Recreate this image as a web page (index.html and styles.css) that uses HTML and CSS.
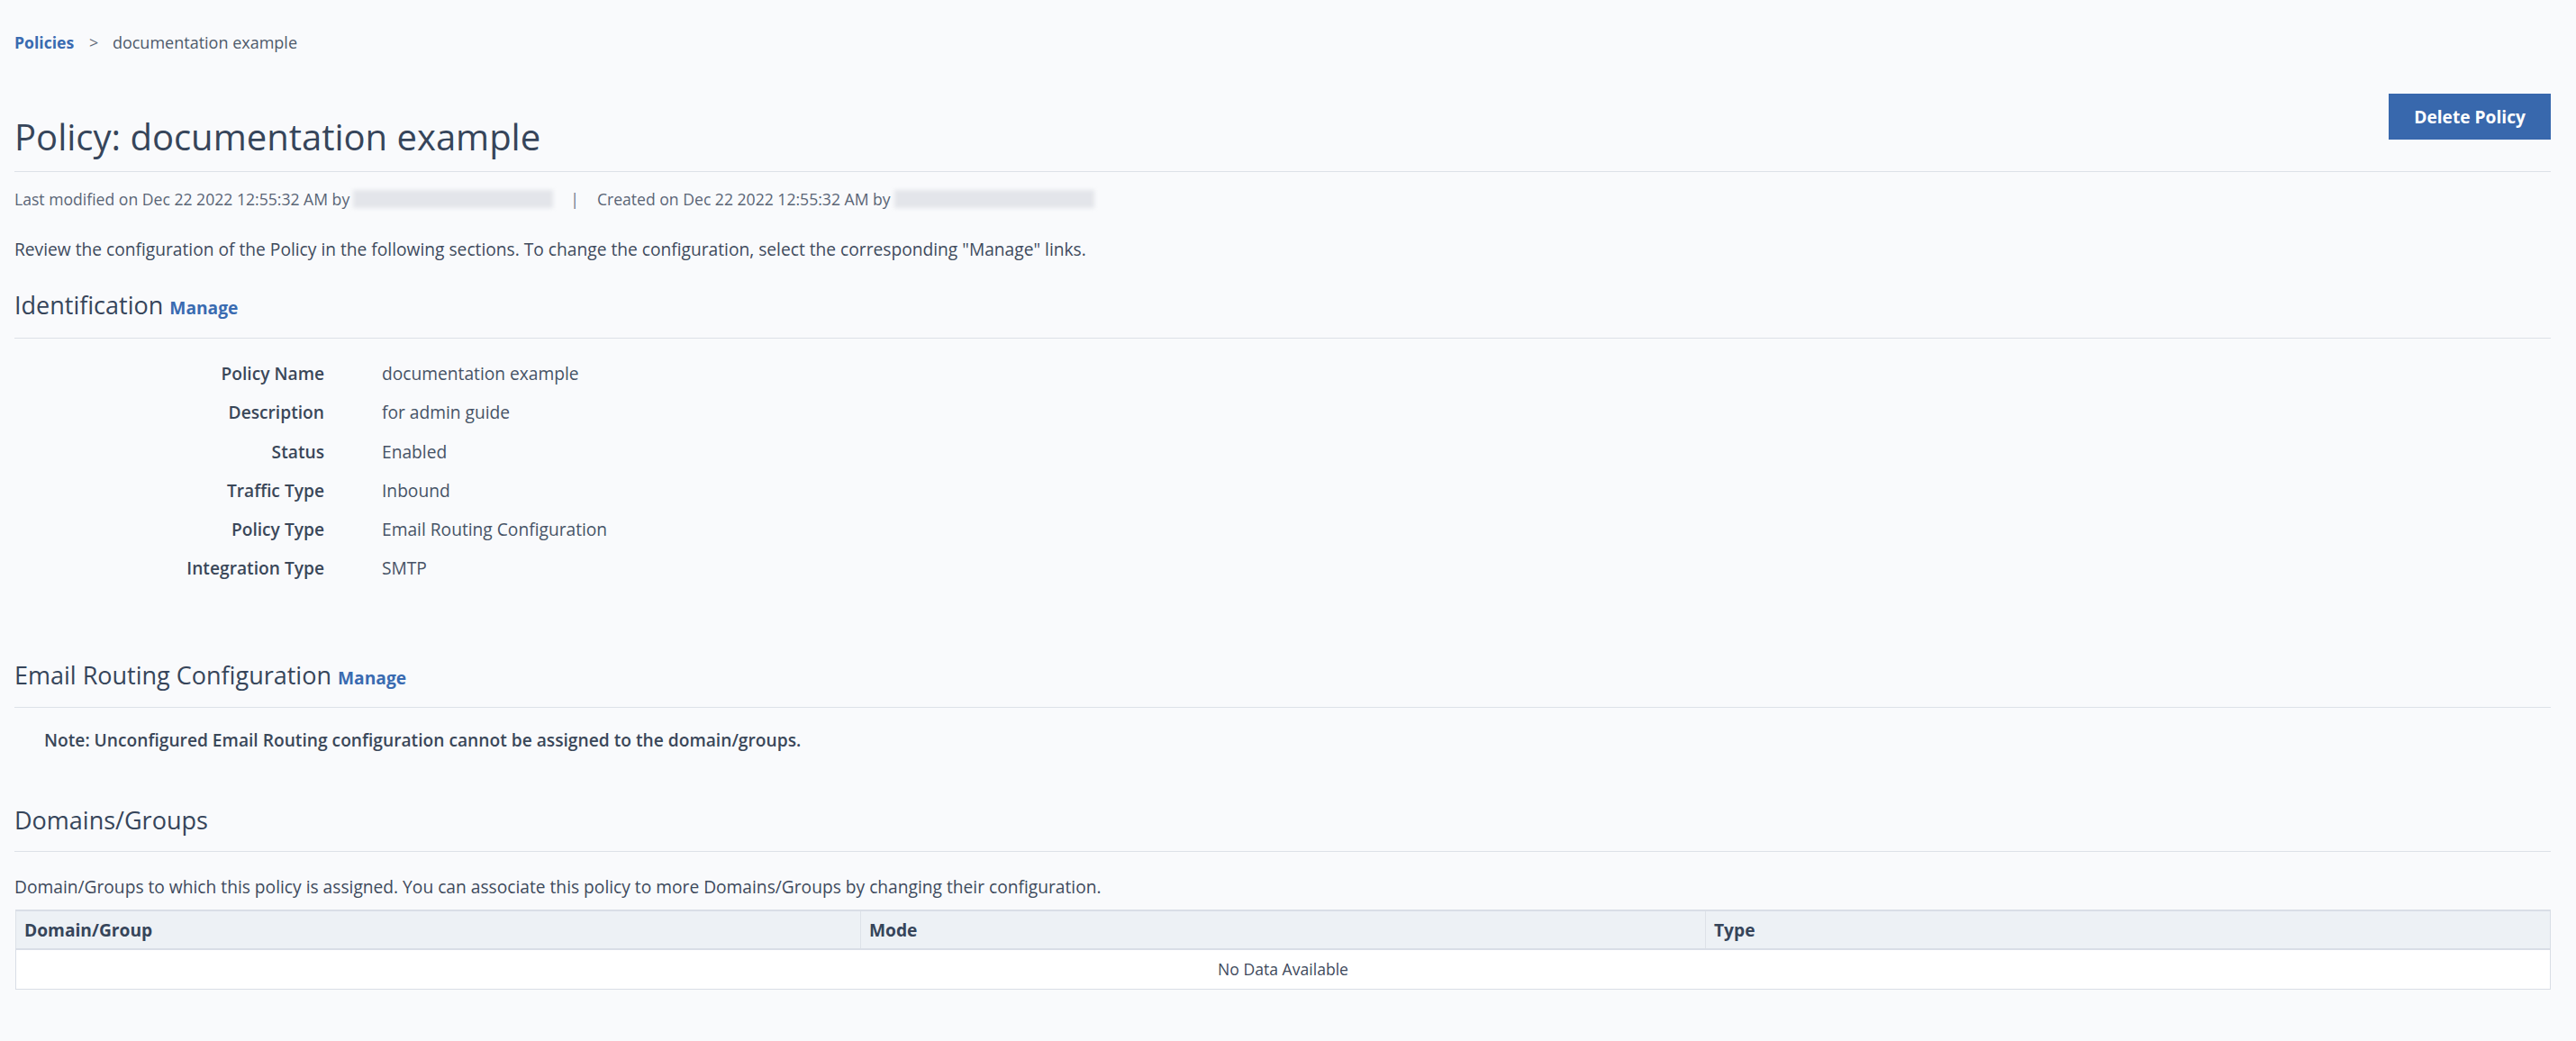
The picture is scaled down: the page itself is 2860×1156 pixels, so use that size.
FILE: index.html
```html
<!DOCTYPE html>
<html>
<head>
	<title>Policy: documentation example</title>
	<link rel="stylesheet" href="styles.css">
</head>
<body>
	<div class="page">
		<div class="breadcrumb">
			<a class="crumb-link" href="#">Policies</a>
			<span class="crumb-sep">&gt;</span>
			<span class="crumb-current">documentation example</span>
		</div>

		<div class="page-header">
			<h1 class="page-title">Policy: documentation example</h1>
			<button class="btn-primary">Delete Policy</button>
		</div>

		<div class="meta">
			<span>Last modified on Dec 22 2022 12:55:32 AM by</span>
			<span class="redacted"></span>
			<span class="meta-sep">|</span>
			<span>Created on Dec 22 2022 12:55:32 AM by</span>
			<span class="redacted"></span>
		</div>

		<p class="intro">Review the configuration of the Policy in the following sections. To change the configuration, select the corresponding "Manage" links.</p>

		<div class="section">
			<h2 class="section-title">Identification <a class="manage" href="#">Manage</a></h2>
			<div class="details">
				<div class="label">Policy Name</div>
				<div class="value">documentation example</div>
				<div class="label">Description</div>
				<div class="value">for admin guide</div>
				<div class="label">Status</div>
				<div class="value">Enabled</div>
				<div class="label">Traffic Type</div>
				<div class="value">Inbound</div>
				<div class="label">Policy Type</div>
				<div class="value">Email Routing Configuration</div>
				<div class="label">Integration Type</div>
				<div class="value">SMTP</div>
			</div>
		</div>

		<div class="section section-routing">
			<h2 class="section-title">Email Routing Configuration <a class="manage" href="#">Manage</a></h2>
			<div class="note">Note: Unconfigured Email Routing configuration cannot be assigned to the domain/groups.</div>
		</div>

		<div class="section section-domains">
			<h2 class="section-title">Domains/Groups</h2>
			<p class="section-desc">Domain/Groups to which this policy is assigned. You can associate this policy to more Domains/Groups by changing their configuration.</p>
			<table class="data-table">
				<thead>
					<tr>
						<th>Domain/Group</th>
						<th>Mode</th>
						<th>Type</th>
					</tr>
				</thead>
				<tbody>
					<tr>
						<td class="empty" colspan="3">No Data Available</td>
					</tr>
				</tbody>
			</table>
		</div>
	</div>
</body>
</html>
```

FILE: styles.css
```css
body {
	margin: 0;
	padding: 0;
	background-color: #f9fafc;
	font-family: "Open Sans", "Noto Sans", sans-serif;
	color: #3a4759;
}
.page {
	padding: 35px 28px 40px 16px;
}
.breadcrumb {
	font-size: 18px;
	line-height: 24px;
	color: #4e5a6b;
}
.crumb-link {
	color: #3a6bb1;
	font-size: 17.6px;
	font-weight: 700;
	text-decoration: none;
}
.crumb-sep {
	margin: 0 11px 0 12px;
	color: #5d6878;
}
.page-header {
	display: flex;
	justify-content: space-between;
	align-items: flex-start;
	margin-top: 45px;
	padding-bottom: 11px;
	border-bottom: 1px solid #dde1e8;
}
.page-title {
	margin: 21px 0 0;
	font-size: 40px;
	line-height: 54px;
	font-weight: 400;
	color: #36455a;
}
.btn-primary {
	height: 51px;
	padding: 0 28px;
	border: none;
	background-color: #3868ad;
	color: #fff;
	font-family: inherit;
	font-size: 19.2px;
	font-weight: 700;
}
.meta {
	display: flex;
	align-items: center;
	margin-top: 18px;
	font-size: 17.6px;
	line-height: 24px;
	color: #5a6576;
}
.redacted {
	display: inline-block;
	width: 222px;
	height: 20px;
	margin-left: 4px;
	background-color: #e3e5ea;
	filter: blur(2px);
}
.meta-sep {
	margin: 0 20px 0 19px;
	color: #6b7585;
}
.intro {
	margin: 32px 0 0;
	font-size: 19.2px;
	line-height: 24px;
	color: #3e4a5c;
}
.section {
	margin-top: 32px;
}
.section-routing {
	margin-top: 79px;
}
.section-routing .section-title {
	padding-bottom: 14px;
}
.section-domains {
	margin-top: 57px;
}
.section-domains .section-title {
	padding-bottom: 16px;
}
.section-title {
	margin: 0;
	padding-bottom: 15px;
	border-bottom: 1px solid #dde1e8;
	font-size: 27px;
	line-height: 36px;
	font-weight: 400;
	color: #36455a;
}
.manage {
	color: #3a6bb1;
	font-size: 19.2px;
	font-weight: 700;
	text-decoration: none;
}
.details {
	display: grid;
	grid-template-columns: 344px 1fr;
	column-gap: 64px;
	margin-top: 17px;
	font-size: 19.2px;
	line-height: 43.3px;
}
.label {
	text-align: right;
	font-weight: 600;
	color: #3a4759;
}
.value {
	color: #465366;
}
.note {
	margin-top: 22px;
	padding-left: 33px;
	font-size: 19.2px;
	line-height: 28px;
	font-weight: 600;
	color: #3a4759;
}
.section-desc {
	margin: 27px 0 0;
	font-size: 19.2px;
	line-height: 24px;
	color: #3e4a5c;
}
.data-table {
	width: calc(100% - 1px);
	margin: 13px 0 0 1px;
	border-collapse: collapse;
	table-layout: fixed;
	border: 1px solid #d9dee6;
}
.data-table th {
	height: 41px;
	padding: 0 9px;
	text-align: left;
	background-color: #edf1f5;
	border-top: 2px solid #d9dee6;
	border-bottom: 2px solid #d9dee6;
	border-left: 1px solid #dde2e8;
	font-size: 19.2px;
	font-weight: 700;
	color: #36455a;
}
.data-table td {
	height: 43px;
	padding: 0;
	background-color: #fff;
}
.empty {
	text-align: center;
	font-size: 17.6px;
	color: #3e4a5c;
}
```
